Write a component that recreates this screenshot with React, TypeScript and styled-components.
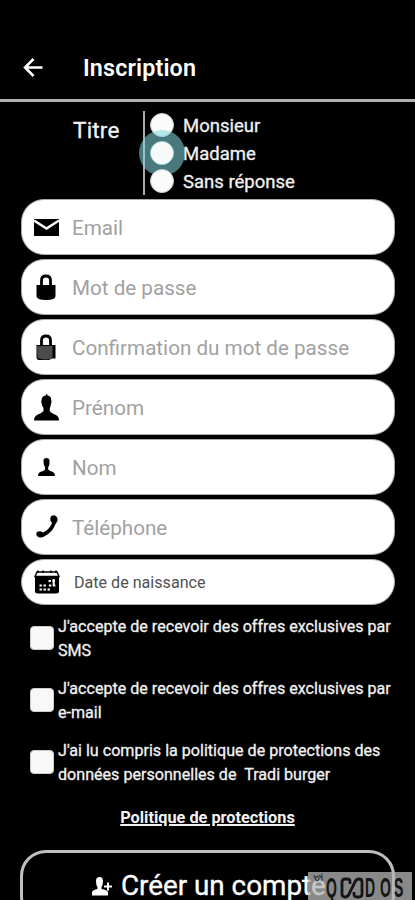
import React from 'react';
import styled, { createGlobalStyle } from 'styled-components';

const GlobalStyle = createGlobalStyle`
  * { box-sizing: border-box; }
  html, body { margin: 0; background: #000; overflow: hidden; }
  body { font-family: Roboto, 'Liberation Sans', sans-serif; color: #f2f2f2; }
`;

const Screen = styled.main`
  position: relative;
  display: flex;
  flex-direction: column;
  width: 415px;
  height: 900px;
  overflow: hidden;
  background: #000;
`;

const Header = styled.header`
  flex: none;
  display: flex;
  align-items: center;
  height: 102px;
  padding: 37px 0 0 23px;
  border-bottom: 3px solid #b0b0b0;
`;

const BackIcon = styled.svg`
  width: 20px;
  height: 20px;
  margin-right: 40px;
`;

const Title = styled.h1`
  margin: 0;
  font-size: 23.3px;
  font-weight: 600;
  line-height: 28px;
  letter-spacing: 0.15px;
  color: #fff;
`;

const TitleField = styled.section`
  flex: none;
  display: flex;
  height: 97px;
  padding: 9px 0 0 73px;
`;

const FieldName = styled.span`
  width: 70px;
  padding-top: 5px;
  font-size: 22.5px;
  line-height: 28px;
  letter-spacing: 0.2px;
  -webkit-text-stroke: 0.35px currentColor;
`;

const Options = styled.div`
  height: 84px;
  border-left: 2px solid #aaa;
  padding-left: 5px;
`;

const Option = styled.label`
  display: flex;
  align-items: center;
  gap: 9px;
  height: 28px;
  padding-top: 1px;
  font-size: 18.5px;
  white-space: nowrap;
  -webkit-text-stroke: 0.3px currentColor;

  &:last-child > span {
    z-index: 3;
  }
`;

const Radio = styled.span<{ $pressed?: boolean }>`
  position: relative;
  width: 24px;
  height: 24px;
  margin-top: -1px;
  border-radius: 50%;
  background: #fafafa;
  border: 1px solid #ccc;
  ${({ $pressed }) => $pressed && `
    &::before {
      content: '';
      position: absolute;
      inset: -12px;
      border-radius: 50%;
      background: rgba(130, 215, 223, 0.56);
      z-index: 1;
    }
    &::after {
      content: '';
      position: absolute;
      inset: 0;
      border-radius: 50%;
      background: #f8fafa;
      z-index: 2;
    }
  `}
`;

const Fields = styled.section`
  flex: none;
  display: flex;
  flex-direction: column;
  gap: 4px;
  padding: 0 20px 0 21px;
`;

const Field = styled.div<{ $compact?: boolean }>`
  display: flex;
  align-items: center;
  height: ${({ $compact }) => ($compact ? 46 : 56)}px;
  padding-left: 10px;
  border: 1px solid #aaa;
  border-radius: 23px;
  background: #fff;
  color: ${({ $compact }) => ($compact ? '#505050' : '#a1a1a1')};
  font-size: ${({ $compact }) => ($compact ? 16.1 : 20.65)}px;
  line-height: 28px;
`;

const FieldIcon = styled.svg`
  flex: none;
  width: 28px;
  height: 30px;
  margin-right: 12px;
`;

const FieldLabel = styled.span<{ $indent?: boolean }>`
  padding: 1px 0 0 ${({ $indent }) => ($indent ? 2 : 0)}px;
`;

const Consents = styled.section`
  flex: none;
  height: 200px;
  padding: 10px 0 0 30px;
`;

const Consent = styled.label`
  display: flex;
  align-items: flex-start;
  gap: 4px;
  height: 62.2px;
  font-size: 16.1px;
  line-height: 24px;
  white-space: pre;
  -webkit-text-stroke: 0.3px currentColor;
`;

const Checkbox = styled.span`
  flex: none;
  width: 24px;
  height: 24px;
  margin-top: 11px;
  border: 1px solid #ccc;
  border-radius: 4px;
  background: #f8f8f8;
`;

const Policy = styled.a`
  flex: none;
  align-self: center;
  margin-top: 1px;
  font-size: 16.3px;
  line-height: 24px;
  font-weight: 700;
  text-decoration: underline;
  text-decoration-thickness: 2px;
  text-underline-offset: 1px;
`;

const CreateButton = styled.button`
  flex: none;
  display: flex;
  align-items: center;
  gap: 8px;
  width: 375px;
  height: 72px;
  margin: 20px 0 0 20px;
  padding: 0 0 1px 69px;
  border: 3px solid #bebebe;
  border-radius: 26px;
  background: #000;
  color: #fff;
  font: 400 27.8px/34px Roboto, sans-serif;
  white-space: nowrap;
  -webkit-text-stroke: 0.35px currentColor;
`;

const AddUserIcon = styled.svg`
  width: 21px;
  height: 20px;
`;

const Watermark = styled.div`
  position: absolute;
  left: 308px;
  bottom: 0;
  display: flex;
  align-items: center;
  width: 104px;
  height: 28px;
  padding: 4px 0 0 18px;
  background: rgba(180, 180, 180, 0.76);
  color: #151515;
`;

const MarkLetter = styled.span<{ $width: number }>`
  flex: none;
  width: ${({ $width }) => $width}px;
  font: 700 27px/22px 'Liberation Sans', sans-serif;
  transform: scaleX(0.52);
  transform-origin: left;
`;

const Prefix = styled.span`
  position: absolute;
  left: 6px;
  top: 0;
  font-size: 9px;
  line-height: 10px;
  transform: rotate(-25deg);
`;

const Loop = styled.svg`
  flex: none;
  width: 25px;
  height: 24px;
`;

const icons: Record<string, React.ReactNode> = {
  mail: (
    <>
      <path d="M2 7H27V24H2Z" />
      <path d="M2 8.5L14.5 16.5L27 8.5" fill="none" stroke="#fff" strokeWidth="2.6" />
    </>
  ),
  lock: (
    <>
      <path d="M9.5 15V8.5Q9.5 4 14 4T18.5 8.5V15" fill="none" stroke="#000" strokeWidth="2.8" />
      <path d="M4.5 13H23.5V24Q23.5 28 14 28Q4.5 28 4.5 24Z" />
    </>
  ),
  lockAlt: (
    <>
      <path d="M9.5 15V8.5Q9.5 4 14 4T18.5 8.5V15" fill="none" stroke="#000" strokeWidth="2.8" />
      <path d="M4.5 13H23.5V26.5H20L17 28H7Q4.5 28 4.5 25Z" />
      <path d="M5 14H20.5V26Q15 29 5.5 26Z" fill="#4b4b4b" />
    </>
  ),
  person: (
    <path d="M9.8 7Q10 4 13.5 3.5L15 1.500L15.5 3.5Q19.500 4 19.200 8Q20 9.500 19 12Q18.500 15 17.800 16V19Q19 21 24 23Q27 24.5 27 28.500H2Q2 24.5 5 23Q10 21 11.500 19V16Q10 14 9.800 12Q8.800 9.500 9.800 7Z" />
  ),
  personSmall: (
    <path d="M11.4 9Q11.5 6 14.5 6T17.6 9L17.4 12Q17 14.5 16.2 15V17.5Q18 19 21 20Q23 21 23 24H6Q6 21 8 20Q12 19 13 17.5V15Q11.5 13 11.4 9Z" />
  ),
  phone: (
    <path d="M18.3 6.5Q18.5 3.2 22 3.2Q26 4 25.5 9L23.5 12Q20.5 20 13 24Q9 26.500 6.5 25Q3.5 23.5 4.5 20.5Q7.5 17.800 11 20.5Q17.5 17.500 20 11Q18 9.5 18.3 6.5Z" />
  ),
  calendar: (
    <>
      <path d="M3 9H27V24Q27 26.5 24 26.5H6Q3 26.5 3 24Z" />
      <path d="M3 9.5L5 5H25L27 9.5Z" fill="#fff" stroke="#000" strokeWidth="1.4" />
      <path d="M6 3.5V6M11 3.5V6M19 3.5V6M24 3.5V6" stroke="#000" strokeWidth="1.5" />
      <path d="M16.5 14h2.4m1.6 0h2.4M7.5 18.5h2.4m1.6 0h2.4m3 0h2.4m1.6 0h2.4M7.5 22.5h2.4m1.6 0h2.4m1.6 0h2.4" stroke="#fff" strokeWidth="2.2" />
      <path d="M21.7 12V19" stroke="#fff" strokeWidth="2" />
    </>
  ),
};

const fields = [
  ['mail', 'Email'],
  ['lock', 'Mot de passe'],
  ['lockAlt', 'Confirmation du mot de passe'],
  ['person', 'Prénom'],
  ['personSmall', 'Nom'],
  ['phone', 'Téléphone'],
  ['calendar', 'Date de naissance'],
];

const consents = [
  "J'accepte de recevoir des offres exclusives par\nSMS",
  "J'accepte de recevoir des offres exclusives par\ne-mail",
  "J'ai lu compris la politique de protections des\ndonnées personnelles de  Tradi burger",
];

export default function App() {
  return (
    <Screen>
      <GlobalStyle />
      <Header>
        <BackIcon viewBox="0 0 20 20" fill="none" stroke="#fff" strokeWidth="2.5">
          <path d="M19.5 9.5H2M10.5 1L2 9.5L10.5 18" />
        </BackIcon>
        <Title>Inscription</Title>
      </Header>
      <TitleField>
        <FieldName>Titre</FieldName>
        <Options>
          <Option><Radio />Monsieur</Option>
          <Option><Radio $pressed />Madame</Option>
          <Option><Radio />Sans réponse</Option>
        </Options>
      </TitleField>
      <Fields>
        {fields.map(([icon, label]) => (
          <Field key={icon} $compact={icon === 'calendar'}>
            <FieldIcon viewBox="0 0 28 30">{icons[icon]}</FieldIcon>
            <FieldLabel $indent={icon === 'calendar'}>{label}</FieldLabel>
          </Field>
        ))}
      </Fields>
      <Consents>
        {consents.map((text) => (
          <Consent key={text}><Checkbox /><span>{text}</span></Consent>
        ))}
      </Consents>
      <Policy>Politique de protections</Policy>
      <CreateButton>
        <AddUserIcon viewBox="0 0 21 20" fill="#fff">
          <path d="M4 5Q4 1 7.5 1T11 5Q11 9 9.5 11V13Q15 14 16 16V19.5H0V16Q1 14 5.5 13V11Q4 9 4 5Z" />
          <path d="M16 6.5V14.5M12 10.5H20" stroke="#fff" strokeWidth="2" />
        </AddUserIcon>
        Créer un compte
      </CreateButton>
      <Watermark>
        <Prefix>by</Prefix>
        <MarkLetter $width={14}>Q</MarkLetter>
        <Loop viewBox="0 0 25 24" fill="none" stroke="#151515" strokeWidth="2.8">
          <path d="M10 8V5Q10 3 7 3H5Q2 3 2 6V18Q2 21 5 21Q8 21 9 18L15 6Q16 3 19 3Q22 3 22 6V18Q22 21 19 21H17Q14 21 14 18V16" />
        </Loop>
        <MarkLetter $width={15}>D</MarkLetter>
        <MarkLetter $width={14}>O</MarkLetter>
        <MarkLetter $width={10}>S</MarkLetter>
      </Watermark>
    </Screen>
  );
}
